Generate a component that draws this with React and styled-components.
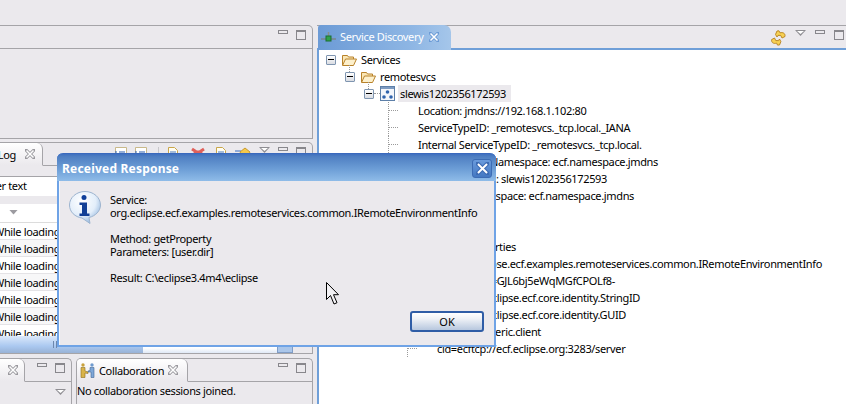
import React from "react";
import styled, { createGlobalStyle, css } from "styled-components";

const GRAY = "#a5a4a8";
const BG = "#ebe9ed";
const FONT = `"Noto Sans", "Liberation Sans", sans-serif`;

const Global = createGlobalStyle`
  html, body { margin: 0; padding: 0; background: ${BG}; overflow: hidden; }
  * { box-sizing: border-box; }
`;

const Page = styled.div`
  position: relative;
  width: 846px;
  height: 404px;
  overflow: hidden;
  display: flex;
  padding-top: 25px;
  gap: 4px;
  background: ${BG};
  color: #000;
  font: 11px/13px ${FONT};
  letter-spacing: -0.35px;
`;

const LeftColumn = styled.div`
  width: 313px;
  flex: none;
  display: flex;
  flex-direction: column;
`;

const Panel = styled.section`
  display: flex;
  flex-direction: column;
  flex: ${p => (p.$grow ? "1 1 0" : "none")};
  height: ${p => (p.$height ? `${p.$height}px` : "auto")};
  margin-top: ${p => p.$top || 0}px;
  min-width: 0;
  border: 1px solid ${GRAY};
  border-left: ${p => (p.$closedLeft ? `1px solid ${GRAY}` : "none")};
  border-top-right-radius: 5px;
  border-top-left-radius: ${p => (p.$closedLeft ? 5 : 0)}px;
  overflow: hidden;
`;

const Bar = styled.div`
  height: 23px;
  flex: none;
  display: flex;
  align-items: flex-start;
  border-bottom: 1px solid ${GRAY};
`;

const Tab = styled.div`
  height: 23px;
  width: ${p => p.$width}px;
  flex: none;
  display: flex;
  align-items: center;
  justify-content: ${p => (p.$end ? "flex-end" : "flex-start")};
  gap: ${p => p.$gap || 0}px;
  padding: ${p => p.$pad || "0"};
  white-space: nowrap;
  background: linear-gradient(#ffffff, ${BG});
  border-right: 1px solid ${GRAY};
  border-bottom: 1px solid ${BG};
  border-top-right-radius: 6px;
  z-index: 1;
`;

const ActiveTab = styled.div`
  width: 133px;
  height: 25px;
  margin: -1px 0 0 1px;
  flex: none;
  display: flex;
  align-items: center;
  padding: 0 0 2px 3px;
  color: #fff;
  white-space: nowrap;
  background: linear-gradient(90deg, #6c9bd6, #8eb6e4 70%, #a5c6ea);
  border-top-right-radius: 7px;
  border-top-left-radius: 3px;
  z-index: 1;
`;

const TabLabel = styled.span`
  margin-left: 4px;
  width: 89px;
  flex: none;
`;

const Tools = styled.div`
  margin-left: auto;
  display: flex;
  align-items: flex-start;
  padding: ${p => p.$pad || "4px 6px 0 0"};
  gap: ${p => p.$gap || 8}px;
`;

const Tool = styled.span`
  display: block;
  flex: none;
  line-height: 0;
  margin-right: ${p => p.$after || 0}px;
`;

const MinButton = styled.span`
  display: block;
  width: 10px;
  height: 4px;
  border: 1px solid #88878c;
  background: ${BG};
`;

const MaxButton = styled.span`
  display: block;
  width: 10px;
  height: 10px;
  border: 1px solid #88878c;
  border-top-width: 2px;
  background: ${BG};
`;

const MarkSvg = styled.svg`
  display: block;
  flex: none;
`;

const CloseMark = ({ color = "#9a999e", fill = "#fff", size = 10 }) => (
  <MarkSvg width={size} height={size} viewBox="0 0 10 10">
    <path d="M1 1 L9 9 M9 1 L1 9" stroke={color} strokeWidth="3.2" strokeLinecap="square" />
    <path d="M1.5 1.5 L8.5 8.500 M8.500 1.5 L1.5 8.500" stroke={fill} strokeWidth="1.5" />
  </MarkSvg>
);

const MenuArrow = styled.span`
  display: block;
  flex: none;
  width: 11px;
  height: 6px;
  background: #8f8e93;
  clip-path: polygon(0 0, 100% 0, 50% 100%);
  position: relative;
  &::after {
    content: "";
    position: absolute;
    left: 2px;
    top: 1px;
    width: 7px;
    height: 3px;
    background: #fff;
    clip-path: polygon(0 0, 100% 0, 50% 100%);
  }
`;

const PageIcon = ({ tint = "#c9a64a" }) => (
  <MarkSvg width="12" height="12" viewBox="0 0 12 12">
    <path d="M1.5.5h6l3 3v8h-9z" fill="#fffdf2" stroke={tint} />
    <path d="M3 5h6M3 7h6" stroke="#4a7ac0" />
  </MarkSvg>
);

const ListIcon = () => (
  <MarkSvg width="12" height="12" viewBox="0 0 12 12">
    <path d="M.5.5h11v11H.5z" fill="#fff" stroke="#c9b98a" />
    <path d="M0 5h2M4 5h6M0 8h2M4 8h6" stroke="#2a5fb0" strokeWidth="1.2" />
  </MarkSvg>
);

const DeleteIcon = () => (
  <MarkSvg width="14" height="12" viewBox="0 0 14 12">
    <path d="M1 2l6 4 6-4M1 8l6-3 6 3" stroke="#e0605a" strokeWidth="3" fill="none" />
  </MarkSvg>
);

const ImportIcon = () => (
  <MarkSvg width="16" height="12" viewBox="0 0 16 12">
    <path d="M0 4h6M0 7h5" stroke="#3a6fc0" />
    <path d="M5 5l5-4 5 4-2 4H7z" fill="#f5c84a" stroke="#c79a2e" />
  </MarkSvg>
);

const Separator = styled.span`
  display: block;
  flex: none;
  width: 1px;
  height: 12px;
  background: #c8c7cb;
  margin-left: 3px;
`;

const FilterBody = styled.div`
  flex: 1 1 0;
  min-height: 0;
  display: flex;
  flex-direction: column;
  padding-top: 10px;
`;

const FilterField = styled.div`
  flex: none;
  height: 20px;
  display: flex;
  align-items: center;
  white-space: nowrap;
  background: #fff;
  border-top: 1px solid ${GRAY};
  padding-bottom: 2px;
`;

const FilterText = styled.span`
  margin-left: -40px;
`;

const TableHead = styled.div`
  flex: none;
  height: 19px;
  margin-top: 8px;
  background: #fff;
  display: flex;
  align-items: center;
  padding: 0 0 2px 9px;
  border-bottom: 1px solid #dcdcdc;
`;

const SortArrow = styled.span`
  display: block;
  width: 9px;
  height: 5px;
  background: #9c9ba0;
  clip-path: polygon(0 0, 100% 0, 50% 100%);
`;

const LogList = styled.div`
  flex: 1 1 0;
  min-height: 0;
  overflow: hidden;
  background: #fff;
`;

const LogRow = styled.div`
  height: 17px;
  display: flex;
  align-items: center;
  border-bottom: 1px solid #e4e3e6;
  background: ${p => (p.$odd ? "#f7f7f8" : "#fff")};
  white-space: nowrap;
`;

const LogText = styled.span`
  margin-left: -6px;
`;

const Scrollbar = styled.div`
  flex: none;
  height: 17px;
  display: flex;
  background: ${BG};
`;

const ScrollThumb = styled.div`
  width: 143px;
  flex: none;
  background: linear-gradient(#dce9fb, #aac8f0 60%, #98b2d6);
  padding-left: 53px;
`;

const ScrollGrip = styled.span`
  display: block;
  width: 4px;
  height: 7px;
  margin-top: 5px;
  border-left: 1px solid #6d87ad;
  border-right: 1px solid #6d87ad;
`;

const ScrollTrack = styled.div`
  width: 134px;
  flex: none;
  background: linear-gradient(#f4f8ff, #ffffff 70%, #dfe8f6);
`;

const ScrollButton = styled.div`
  width: 16px;
  flex: none;
  background: #aac6ea;
  border: 1px solid #7f9cc6;
`;

const BottomRow = styled.div`
  flex: none;
  height: 60px;
  margin-top: 4px;
  display: flex;
  gap: 4px;
`;

const MiniPanel = styled(Panel)`
  width: 72px;
  flex: none;
  border-bottom: none;
`;

const CollabPanel = styled(Panel)`
  flex: 1 1 0;
  border-bottom: none;
`;

const MiniBody = styled.div`
  display: flex;
  justify-content: flex-end;
  padding: 7px 5px 0 0;
`;

const Note = styled.div`
  padding: 2px 0 0 0;
  white-space: nowrap;
`;

const RightColumn = styled.div`
  width: 529px;
  flex: none;
  display: flex;
  flex-direction: column;
`;

const DiscoveryHead = styled.div`
  height: 23px;
  flex: none;
  display: flex;
  border-top: 1px solid ${GRAY};
`;

const DiscoveryBody = styled.div`
  flex: 1 1 0;
  background: #fff;
  border-top: 2px solid #6f9fd8;
  border-left: 2px solid #6f9fd8;
  padding-top: 1px;
  overflow: hidden;
`;

const TreeRow = styled.div`
  height: 17px;
  display: flex;
  align-items: center;
  padding-left: ${p => p.$indent}px;
  white-space: nowrap;
`;

const EndRow = styled.div`
  height: 17px;
  width: ${p => p.$end}px;
  display: flex;
  align-items: center;
  justify-content: flex-end;
  white-space: nowrap;
`;

const EndText = styled.span`
  flex: none;
`;

const Twisty = styled.span`
  position: relative;
  display: block;
  flex: none;
  width: 10px;
  height: 10px;
  background: linear-gradient(#fff, #d9dce2);
  border: 1px solid #7f95b0;
  border-radius: 1px;
  &::after {
    content: "";
    position: absolute;
    left: 1px;
    top: 3px;
    width: 6px;
    height: 1px;
    background: #000;
  }
  ${p => p.$stem && css`
    &::before {
      content: "";
      position: absolute;
      left: 3px;
      top: -8px;
      height: 7px;
      border-left: 1px dotted #9a9a9a;
    }
  `}
`;

const HDots = styled.span`
  display: block;
  flex: none;
  width: ${p => p.$w}px;
  border-top: 1px dotted #9a9a9a;
`;

const Elbow = styled.span`
  position: relative;
  display: block;
  flex: none;
  width: 10px;
  height: 17px;
  margin-right: 20px;
  &::before {
    content: "";
    position: absolute;
    left: 0;
    top: 0;
    bottom: 0;
    border-left: 1px dotted #9a9a9a;
  }
  &::after {
    content: "";
    position: absolute;
    left: 0;
    right: 0;
    top: 8px;
    border-top: 1px dotted #9a9a9a;
  }
`;

const Selected = styled.span`
  display: block;
  flex: none;
  height: 17px;
  line-height: 17px;
  background: ${BG};
  padding: 0 5px 0 2px;
  margin-left: 3px;
  width: 113px;
`;

const FolderLabel = styled.span`
  margin-left: 4px;
`;

const FolderSvg = styled.svg`
  flex: none;
  margin-left: 6px;
`;

const FolderIcon = () => (
  <FolderSvg width="15" height="12" viewBox="0 0 15 12">
    <path d="M.5 11V1.5h5l1 1.5h5v2" fill="#fbe7b5" stroke="#b8822a" />
    <path d="M.5 11.500l3-6.500h11l-3 6.500z" fill="#fdf0cc" stroke="#b8822a" />
  </FolderSvg>
);

const ServiceIcon = () => (
  <MarkSvg width="15" height="15" viewBox="0 0 15 15">
    <rect x=".5" y=".5" width="14" height="14" fill="#f3f6fb" stroke="#5d7fa8" />
    <rect x="1" y="1" width="13" height="2" fill="#7d9bc2" />
    <circle cx="7.500" cy="6" r="1.800" fill="#2f63ad" />
    <circle cx="4" cy="11" r="1.800" fill="#2f63ad" />
    <circle cx="11" cy="11" r="1.800" fill="#2f63ad" />
  </MarkSvg>
);

const DiscoveryIcon = () => (
  <MarkSvg width="15" height="10" viewBox="0 0 15 10">
    <path d="M0 7h15" stroke="#7c7f7a" strokeWidth="1.2" />
    <path d="M7.500 0v4" stroke="#8a8d88" strokeWidth="1.5" />
    <rect x="5" y="4" width="5" height="5" fill="#2fa24a" stroke="#1c6e30" />
  </MarkSvg>
);

const CollabIcon = () => (
  <MarkSvg width="15" height="15" viewBox="0 0 15 15">
    <circle cx="3" cy="2" r="1.700" fill="#c9a13c" />
    <path d="M1 4.500h4V8l3 1v1.500L5 10v4.500H1z" fill="#d9b44a" stroke="#8d6f1e" strokeWidth=".6" />
    <circle cx="12" cy="2" r="1.700" fill="#6f9bcf" />
    <path d="M10 4.500h4v10h-3V9L8 9V8l2-.5z" fill="#7ea7d8" stroke="#3f6494" strokeWidth=".6" />
  </MarkSvg>
);

const SyncIcon = () => (
  <MarkSvg width="15" height="16" viewBox="0 0 15 16">
    <path d="M6 1l-1.500 3.500L6 7l1-1.600h2.700L11 8l3-1.500c.5-3-2-4.600-5-3.600L8 .8z" fill="#f7d154" stroke="#b5801d" strokeWidth=".9" />
    <path d="M8.500 15l1.400-3.400L8.500 9l-1 1.600H4.800L3.500 8 .6 9.600c-.4 3 2 4.500 5 3.500l.9 2z" fill="#f7d154" stroke="#b5801d" strokeWidth=".9" />
  </MarkSvg>
);

const Dialog = styled.div`
  position: absolute;
  left: 57px;
  top: 153px;
  width: 439px;
  height: 194px;
  display: flex;
  flex-direction: column;
  background: ${BG};
  border: 2px solid #6fa3e6;
  border-top: none;
  border-radius: 6px 6px 0 0;
  z-index: 5;
`;

const TitleBar = styled.div`
  height: 28px;
  flex: none;
  margin: 0 -2px;
  display: flex;
  align-items: center;
  padding: 2px 4px 0 5px;
  color: #fff;
  font: bold 12px/14px ${FONT};
  letter-spacing: 0.2px;
  background: linear-gradient(#3f70bf 0, #4f7fc2 10%, #6c9dd6 55%, #8fbce8);
  border-radius: 6px 6px 0 0;
  border-top: 1px solid #3a69bd;
`;

const CloseButton = styled.div`
  margin-left: auto;
  width: 20px;
  height: 19px;
  border: 1px solid #3d6cb4;
  border-radius: 3px;
  background: linear-gradient(#6a9bdc, #4478c2);
  display: flex;
  align-items: center;
  justify-content: center;
`;

const DialogBody = styled.div`
  flex: 1 1 0;
  position: relative;
  display: flex;
  border-left: 1px solid #f4f7fc;
  padding: 10px 0 0 9px;
`;

const InfoWrap = styled.div`
  width: 32px;
  flex: none;
`;

const Message = styled.div`
  margin-left: 9px;
  padding-top: 2px;
`;

const Line = styled.div`
  height: 13px;
  white-space: nowrap;
`;

const OkButton = styled.button`
  position: absolute;
  left: 350px;
  top: 130px;
  width: 74px;
  height: 21px;
  padding: 0;
  border: 2px solid #2f5da6;
  border-radius: 3px;
  background: linear-gradient(#ffffff, #eef1f6 35%, #b7c7de);
  color: #000;
  font: 11px/13px ${FONT};
`;

const CursorMark = styled.svg`
  position: absolute;
  left: 326px;
  top: 282px;
  z-index: 6;
`;

const InfoIcon = () => (
  <MarkSvg width="32" height="33" viewBox="0 0 32 33">
    <defs>
      <radialGradient id="bub" cx="40%" cy="30%" r="75%">
        <stop offset="0" stopColor="#ffffff" />
        <stop offset="0.6" stopColor="#e3eefa" />
        <stop offset="1" stopColor="#8fb3dc" />
      </radialGradient>
    </defs>
    <path d="M16 .5C7.500.5.5 6.500.5 14c0 7 5.500 12 12.500 13l8 5.500-1-6c6.500-1.500 11.500-6.500 11.500-12.500C31.500 6.500 24.500.5 16 .5z" fill="url(#bub)" stroke="#9db4cf" />
    <circle cx="15" cy="6.500" r="2.500" fill="#0f3f9a" />
    <path d="M10.500 11.500h7.500v11h2.500V25h-10v-2.500H13V14h-2.500z" fill="#123f96" />
  </MarkSvg>
);

const logRows = Array.from({ length: 7 }, (_, i) => i);

const TreeLines = [
  "Location: jmdns://192.168.1.102:80",
  "ServiceTypeID: _remotesvcs._tcp.local._IANA",
  "Internal ServiceTypeID: _remotesvcs._tcp.local.",
];

const endRows = [
  [339, "ServiceID Namespace: ecf.namespace.jmdns"],
  [288, "Service name: slewis1202356172593"],
  [315, "Namespace: ecf.namespace.jmdns"],
  [0, ""],
  [0, ""],
  [197, "Properties"],
  [503, "objectClass=org.eclipse.ecf.examples.remoteservices.common.IRemoteEnvironmentInfo"],
  [296, "service.id=GJL6bj5eWqMGfCPOLf8-"],
  [321, "namespace=org.eclipse.ecf.core.identity.StringID"],
  [307, "idType=org.eclipse.ecf.core.identity.GUID"],
  [222, "factory=ecf.generic.client"],
];

export default function App() {
  return (
    <Page>
      <Global />
      <LeftColumn>
        <Panel $height={114}>
          <Bar>
            <Tools>
              <MinButton />
              <MaxButton />
            </Tools>
          </Bar>
        </Panel>

        <Panel $height={212} $top={3}>
          <Bar>
            <Tab $width={43} $end $gap={9} $pad="0 7px 0 0">
              <span>Error Log</span>
              <CloseMark />
            </Tab>
            <Tools $pad="4px 6px 0 0">
              <ListIcon />
              <ListIcon />
              <Separator />
              <Tool $after={4}><PageIcon /></Tool>
              <Tool $after={2}><DeleteIcon /></Tool>
              <PageIcon />
              <ImportIcon />
              <MenuArrow />
              <MinButton />
              <MaxButton />
            </Tools>
          </Bar>
          <FilterBody>
            <FilterField>
              <FilterText>type filter text</FilterText>
            </FilterField>
            <TableHead>
              <SortArrow />
            </TableHead>
            <LogList>
              {logRows.map(i => (
                <LogRow key={i} $odd={i % 2 === 1}>
                  <LogText>While loading class</LogText>
                </LogRow>
              ))}
            </LogList>
            <Scrollbar>
              <ScrollThumb>
                <ScrollGrip />
              </ScrollThumb>
              <ScrollTrack />
              <ScrollButton />
            </Scrollbar>
          </FilterBody>
        </Panel>

        <BottomRow>
          <MiniPanel>
            <Bar>
              <Tab $width={25} $pad="0 0 0 8px">
                <CloseMark />
              </Tab>
              <Tools>
                <MinButton />
                <MaxButton />
              </Tools>
            </Bar>
            <MiniBody>
              <MenuArrow />
            </MiniBody>
          </MiniPanel>
          <CollabPanel $closedLeft>
            <Bar>
              <Tab $width={111} $pad="0 0 0 3px" $gap={4}>
                <CollabIcon />
                <span>Collaboration</span>
                <CloseMark />
              </Tab>
              <Tools>
                <MinButton />
                <MaxButton />
              </Tools>
            </Bar>
            <Note>No collaboration sessions joined.</Note>
          </CollabPanel>
        </BottomRow>
      </LeftColumn>

      <RightColumn>
        <DiscoveryHead>
          <ActiveTab>
            <DiscoveryIcon />
            <TabLabel>Service Discovery</TabLabel>
            <CloseMark color="#6c9bd6" />
          </ActiveTab>
          <Tools $pad="4px 2px 0 0" $gap={9}>
            <SyncIcon />
            <MenuArrow />
            <MinButton />
            <MaxButton />
          </Tools>
        </DiscoveryHead>
        <DiscoveryBody>
          <TreeRow $indent={7}>
            <Twisty />
            <FolderIcon />
            <FolderLabel>Services</FolderLabel>
          </TreeRow>
          <TreeRow $indent={26}>
            <Twisty $stem />
            <FolderIcon />
            <FolderLabel>remotesvcs</FolderLabel>
          </TreeRow>
          <TreeRow $indent={45}>
            <Twisty $stem />
            <HDots $w={6} />
            <ServiceIcon />
            <Selected>slewis1202356172593</Selected>
          </TreeRow>
          {TreeLines.map(t => (
            <TreeRow key={t} $indent={69}>
              <Elbow />
              <span>{t}</span>
            </TreeRow>
          ))}
          {endRows.map(([end, text], i) => (
            <EndRow key={i} $end={end}>
              <EndText>{text}</EndText>
            </EndRow>
          ))}
          <TreeRow $indent={88}>
            <Elbow />
            <span>cid=ecftcp://ecf.eclipse.org:3283/server</span>
          </TreeRow>
        </DiscoveryBody>
      </RightColumn>

      <Dialog>
        <TitleBar>
          <span>Received Response</span>
          <CloseButton>
            <CloseMark color="#3d6cb4" size={13} />
          </CloseButton>
        </TitleBar>
        <DialogBody>
          <InfoWrap>
            <InfoIcon />
          </InfoWrap>
          <Message>
            <Line>Service:</Line>
            <Line>org.eclipse.ecf.examples.remoteservices.common.IRemoteEnvironmentInfo</Line>
            <Line />
            <Line>Method: getProperty</Line>
            <Line>Parameters: [user.dir]</Line>
            <Line />
            <Line>Result: C:\eclipse3.4m4\eclipse</Line>
          </Message>
          <OkButton>OK</OkButton>
        </DialogBody>
      </Dialog>

      <CursorMark width="13" height="23" viewBox="0 0 13 23">
        <path d="M.5.5v17l4-4 3.500 8.500 3-1.300-3.500-8h5z" fill="#f2f1f4" stroke="#000" />
      </CursorMark>
    </Page>
  );
}
